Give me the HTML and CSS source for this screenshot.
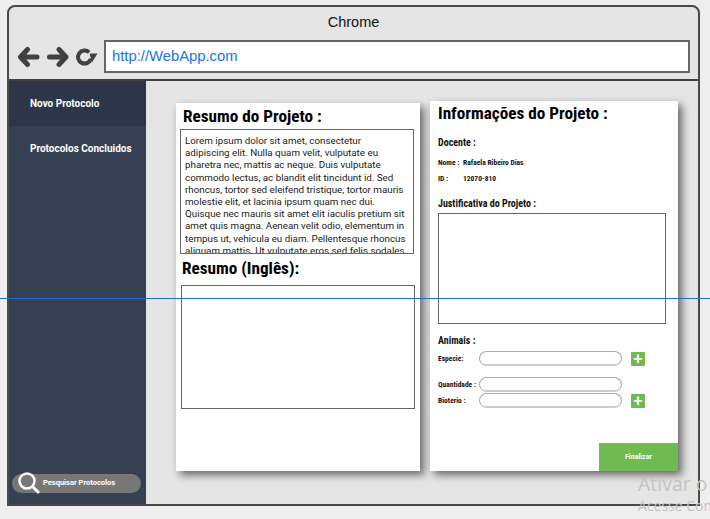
FILE: index.html
```html
<!DOCTYPE html>
<html lang="en">
<head>
  <meta charset="UTF-8">
  <title>WebApp</title>
  <link rel="stylesheet" href="styles.css">
</head>
<body>
  <div class="window">
    <div class="chrome">
      <div class="chrome-title">Chrome</div>
      <div class="toolbar">
        <svg class="nav-icon" width="24" height="22" viewBox="0 0 24 22">
          <path d="M20 11H4M10.500 3.500L3.500 11L10.500 18.500" fill="none" stroke="#404040" stroke-width="5" stroke-linecap="round" stroke-linejoin="round"/>
        </svg>
        <svg class="nav-icon" width="24" height="22" viewBox="0 0 24 22">
          <path d="M3.500 11H19.500M13 3.500L20 11L13 18.500" fill="none" stroke="#404040" stroke-width="5" stroke-linecap="round" stroke-linejoin="round"/>
        </svg>
        <svg class="nav-icon" width="24" height="22" viewBox="0 0 24 22">
          <path d="M14.100 6.400A6.500 6.500 0 1 0 15.800 12.700" fill="none" stroke="#404040" stroke-width="4"/>
          <path d="M14.500 7.500L22.500 7.500L17 16.500Z" fill="#404040"/>
        </svg>
        <div class="address">http://WebApp.com</div>
      </div>
    </div>
    <div class="app">
      <nav class="sidebar">
        <a class="nav-item active">Novo Protocolo</a>
        <a class="nav-item">Protocolos Concluidos</a>
        <div class="search-pill">
          <svg class="search-icon" width="24" height="24" viewBox="0 0 24 24">
            <circle cx="10" cy="9" r="7.500" fill="none" stroke="#fff" stroke-width="2.500"/>
            <path d="M15.500 14.500L22 21" stroke="#fff" stroke-width="3"/>
          </svg>
          <span>Pesquisar Protocolos</span>
        </div>
      </nav>
      <main class="content">
        <section class="card card-left">
          <h2 class="card-title">Resumo do Projeto :</h2>
          <div class="abstract">Lorem ipsum dolor sit amet, consectetur adipiscing elit. Nulla quam velit, vulputate eu pharetra nec, mattis ac neque. Duis vulputate commodo lectus, ac blandit elit tincidunt id. Sed rhoncus, tortor sed eleifend tristique, tortor mauris molestie elit, et lacinia ipsum quam nec dui. Quisque nec mauris sit amet elit iaculis pretium sit amet quis magna. Aenean velit odio, elementum in tempus ut, vehicula eu diam. Pellentesque rhoncus aliquam mattis. Ut vulputate eros sed felis sodales</div>
          <h2 class="card-title card-title-second">Resumo (Inglês):</h2>
          <div class="box box-english"></div>
        </section>
        <section class="card card-right">
          <h2 class="card-title info-title">Informações do Projeto :</h2>
          <h3 class="label label-docente">Docente :</h3>
          <div class="meta-row"><span class="meta-key">Nome :</span><span>Rafaela Ribeiro Dias</span></div>
          <div class="meta-row meta-row-id"><span class="meta-key">ID :</span><span>12070-810</span></div>
          <h3 class="label label-just">Justificativa do Projeto :</h3>
          <div class="box box-just"></div>
          <h3 class="label label-animals">Animais :</h3>
          <div class="field field-species">
            <span class="field-label">Especie:</span>
            <span class="pill-input"></span>
            <span class="add-btn">+</span>
          </div>
          <div class="field field-qty">
            <span class="field-label">Quantidade :</span>
            <span class="pill-input"></span>
          </div>
          <div class="field field-bio">
            <span class="field-label">Bioterio :</span>
            <span class="pill-input"></span>
            <span class="add-btn">+</span>
          </div>
          <button class="finish">Finalizar</button>
        </section>
      </main>
    </div>
  </div>
  <div class="guide"></div>
  <div class="watermark">
    <div class="watermark-big">Ativar o</div>
    <div class="watermark-small">Acesse Con</div>
  </div>
</body>
</html>
```

FILE: styles.css
```css
html, body {
  margin: 0;
  padding: 0;
}
body {
  width: 710px;
  height: 519px;
  overflow: hidden;
  position: relative;
  background: #eeeeee;
  font-family: "Liberation Sans", Arial, sans-serif;
}
.window {
  box-sizing: border-box;
  width: 693px;
  height: 501px;
  margin: 5px 0 0 7px;
  border: 2px solid #4a4a4a;
  border-radius: 8px 8px 0 0;
  background: #e5e5e5;
  display: flex;
  flex-direction: column;
}
.chrome {
  height: 72px;
  flex: none;
  border-bottom: 2px solid #404040;
}
.chrome-title {
  padding-top: 7px;
  text-align: center;
  font-size: 14.500px;
  line-height: 17px;
  color: #111;
}
.toolbar {
  display: flex;
  align-items: center;
  gap: 5px;
  margin-top: 9px;
  padding: 0 8px 0 8px;
}
.nav-icon {
  flex: none;
}
.address {
  box-sizing: border-box;
  flex: 1;
  height: 33px;
  padding-left: 6px;
  background: #fff;
  border: 2px solid #666;
  color: #1a73e8;
  font-size: 14.800px;
  line-height: 29px;
}
.app {
  flex: 1;
  display: flex;
  min-height: 0;
}
.sidebar {
  width: 137px;
  flex: none;
  background: #354052;
  display: flex;
  flex-direction: column;
  font-family: Roboto, sans-serif;
}
.nav-item {
  height: 45px;
  padding-left: 21px;
  color: #fff;
  font-size: 10px;
  font-weight: 700;
  line-height: 45px;
}
.nav-item.active {
  background: #2d3648;
}
.search-pill {
  position: relative;
  height: 19px;
  margin: auto 5px 11px 3px;
  border-radius: 10px;
  background: #777777;
  color: #fff;
  font-size: 7.500px;
  font-weight: 700;
  line-height: 18px;
  padding-left: 31px;
}
.search-icon {
  position: absolute;
  left: 5px;
  top: -2px;
}
.content {
  flex: 1;
  display: flex;
  align-items: flex-start;
  padding: 20px 0 0 30px;
  gap: 10px;
}
.card {
  box-sizing: border-box;
  background: #fff;
  box-shadow: 4px 4px 8px rgba(0, 0, 0, 0.55);
  font-family: "Roboto Condensed", "Liberation Sans Narrow", Roboto, sans-serif;
  display: flex;
  flex-direction: column;
}
.card-left {
  width: 244px;
  height: 368px;
  margin-top: 2px;
  padding: 3px 6px 0 4px;
}
.card-right {
  width: 248px;
  height: 370px;
}
.card-title {
  margin: 0;
  font-size: 17.200px;
  line-height: 20px;
  font-weight: 700;
  color: #000;
  padding-left: 3px;
}
.card-title-second {
  margin-top: 4px;
  padding-left: 2px;
}
.abstract {
  box-sizing: border-box;
  height: 125px;
  margin-top: 3px;
  padding: 5px 5px 0 4px;
  overflow: hidden;
  border: 1px solid #666;
  font-family: Roboto, sans-serif;
  font-size: 9.800px;
  line-height: 12.200px;
  color: #1a1a1a;
}
.box {
  box-sizing: border-box;
  border: 1px solid #666;
  background: #fff;
}
.box-english {
  width: 234px;
  height: 124px;
  margin-top: 7px;
  margin-left: 1px;
}
.info-title {
  margin: 2px 0 0 8px;
  padding: 0;
}
.label {
  margin: 0 0 0 8px;
  font-size: 10px;
  line-height: 12px;
  font-weight: 700;
  color: #111;
}
.label-docente {
  margin-top: 14px;
}
.meta-row {
  display: flex;
  margin: 9px 0 0 8px;
  font-size: 7.500px;
  line-height: 9px;
  font-weight: 700;
  color: #111;
}
.meta-row-id {
  margin-top: 7px;
}
.meta-key {
  width: 25px;
}
.label-just {
  margin-top: 15px;
}
.box-just {
  width: 228px;
  height: 111px;
  margin: 3px 0 0 8px;
}
.label-animals {
  margin-top: 11px;
}
.field {
  display: flex;
  align-items: center;
  margin-left: 8px;
  font-size: 7.500px;
  font-weight: 700;
  color: #111;
}
.field-species {
  margin-top: 4px;
}
.field-qty {
  margin-top: 11px;
}
.field-bio {
  margin-top: 1px;
}
.field-label {
  width: 41px;
  flex: none;
}
.pill-input {
  box-sizing: border-box;
  width: 143px;
  height: 15px;
  border: 1px solid #aaa;
  border-bottom-width: 2px;
  border-bottom-color: #ccc;
  border-radius: 8px;
  background: #fff;
}
.add-btn {
  width: 14px;
  height: 14px;
  margin-left: 9px;
  border-radius: 1px;
  background: #70ba52;
  color: #fff;
  font-family: "Liberation Sans", sans-serif;
  font-size: 16px;
  line-height: 14px;
  text-align: center;
}
.finish {
  align-self: flex-end;
  width: 79px;
  height: 28px;
  margin-top: auto;
  padding: 0;
  border: 0;
  background: #70ba52;
  color: #fff;
  font-family: Roboto, sans-serif;
  font-size: 7px;
  font-weight: 700;
}
.guide {
  position: absolute;
  left: 0;
  right: 0;
  top: 298px;
  height: 1px;
  background: #1a6fd6;
}
.watermark {
  position: absolute;
  left: 638px;
  right: 0;
  top: 472px;
  overflow: hidden;
  white-space: nowrap;
  color: #c4c4c4;
  font-family: "Open Sans", sans-serif;
}
.watermark-big {
  font-size: 19.500px;
  line-height: 24px;
}
.watermark-small {
  font-size: 14px;
  line-height: 18px;
  margin-top: 1px;
}
```
